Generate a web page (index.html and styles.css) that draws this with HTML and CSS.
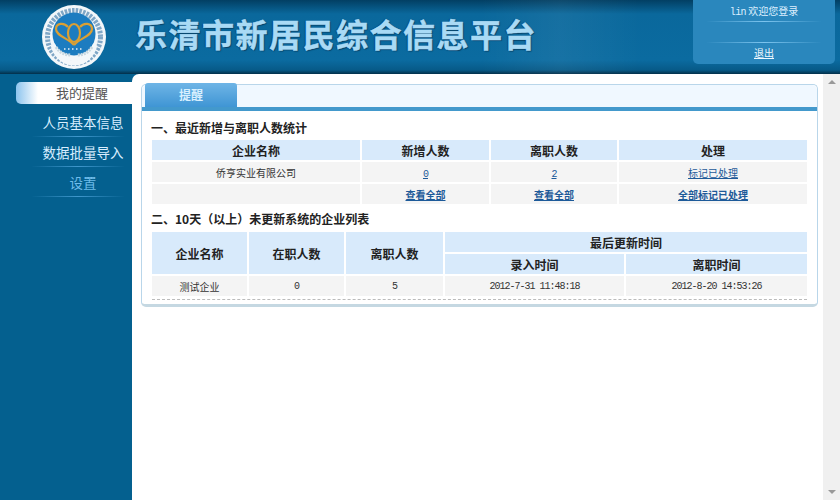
FILE: index.html
```html
<!DOCTYPE html>
<html>
	<head>
		<meta charset="utf-8" />
		<title>乐清市新居民综合信息平台</title>
		<link rel="stylesheet" href="styles.css">
	</head>
	<body>
		<div class="header">
			<div class="logo">
				<svg width="66" height="66" viewBox="0 0 66 66">
					<circle cx="33" cy="32" r="32" fill="#f3f7fa"/>
					<circle cx="33" cy="32" r="26.5" fill="none" stroke="#7fa6c6" stroke-width="5" stroke-dasharray="2.5 1.2"/>
					<circle cx="33" cy="29" r="21.5" fill="#1c7cc0"/>
					<path d="M12 40C15 52 24 58 33 58C42 58 51 52 54 40" fill="none" stroke="#f3f7fa" stroke-width="5"/>
					<g fill="none" stroke="#dca033" stroke-width="2.2">
						<path d="M33 40C27 33 15 31 15 24C15 18 23 17 27 22"/>
						<path d="M33 40C39 33 51 31 51 24C51 18 43 17 39 22"/>
						<ellipse cx="33" cy="28" rx="6" ry="9"/>
					</g>
					<path d="M23 44H43" stroke="#e8f2f8" stroke-width="1.5" stroke-dasharray="1.5 2.5"/>
					<g fill="none" stroke="#c9d8e0" stroke-width="3" stroke-dasharray="2 1">
						<path d="M15 42C19 48 24 50 30 50"/>
						<path d="M51 42C47 48 42 50 36 50"/>
					</g>
				</svg>
			</div>
			<div class="site-title">乐清市新居民综合信息平台</div>
			<div class="user-box">
				<div class="user-line first"><span class="user-name">lin</span> 欢迎您登录</div>
				<div class="user-line"></div>
				<div class="user-line last"><a href="#">退出</a></div>
			</div>
		</div>
		<div class="wrap">
			<div class="side">
				<a class="side-on" href="#">我的提醒</a>
				<a class="side-item" href="#">人员基本信息</a>
				<a class="side-item" href="#">数据批量导入</a>
				<a class="side-item dim" href="#">设置</a>
			</div>
			<div class="main">
				<div class="panel">
					<div class="tabs"><span class="tab">提醒</span></div>
					<div class="panel-body">
						<h3>一、最近新增与离职人数统计</h3>
						<table class="list list1">
							<tr>
								<th class="c1">企业名称</th>
								<th class="c2">新增人数</th>
								<th class="c3">离职人数</th>
								<th>处理</th>
							</tr>
							<tr>
								<td>侨亨实业有限公司</td>
								<td><a class="mono" href="#">0</a></td>
								<td><a class="mono" href="#">2</a></td>
								<td><a href="#">标记已处理</a></td>
							</tr>
							<tr>
								<td></td>
								<td><a class="bold" href="#">查看全部</a></td>
								<td><a class="bold" href="#">查看全部</a></td>
								<td><a class="bold" href="#">全部标记已处理</a></td>
							</tr>
						</table>
						<h3 class="second">二、10天（以上）未更新系统的企业列表</h3>
						<table class="list list2">
							<tr>
								<th class="w97" rowspan="2">企业名称</th>
								<th class="w97" rowspan="2">在职人数</th>
								<th class="w99" rowspan="2">离职人数</th>
								<th colspan="2">最后更新时间</th>
							</tr>
							<tr>
								<th class="w182">录入时间</th>
								<th>离职时间</th>
							</tr>
							<tr>
								<td>测试企业</td>
								<td class="mono">0</td>
								<td class="mono">5</td>
								<td class="mono">2012-7-31 11:48:18</td>
								<td class="mono">2012-8-20 14:53:26</td>
							</tr>
						</table>
						<div class="dash"></div>
					</div>
				</div>
			</div>
			<div class="scrollbar">
				<span class="arrow up"></span>
				<span class="arrow down"></span>
			</div>
		</div>
	</body>
</html>
```

FILE: styles.css
```css
*{margin: 0;padding: 0;box-sizing: border-box;}
html,body{height: 100%;overflow: hidden;}
body{font-family: "Noto Sans CJK SC","Liberation Sans",sans-serif;
	font-size: 12px;
	color: #222;
	background-color: #04608f;
	display: flex;
	flex-direction: column;
}
a{color: #1d5a99;}

.header{height: 74px;
	display: flex;
	background:
		linear-gradient(90deg,rgba(255,255,255,0) 480px,rgba(255,255,255,.05) 560px,rgba(255,255,255,0) 640px),
		linear-gradient(#023f63 0,#0a689c 14px,#0b6ba0 60px,#075a88 70px,#032f49 74px);
	flex: none;
}
.logo{width: 135px;padding: 5px 0 0 41px;flex: none;}
.site-title{width: 558px;
	padding-top: 10px;
	font-size: 32px;
	line-height: 46px;
	font-weight: 700;
	letter-spacing: 1.5px;
	color: #a9daf5;
	-webkit-text-stroke: .5px #a9daf5;
	text-shadow: 1px 1px 1px #063f63,-1px 0 1px #063f63;
	white-space: nowrap;
}
.user-box{width: 142px;
	height: 64px;
	background-color: #2a87bd;
	border-radius: 0 0 5px 5px;
	padding: 0 14px;
	color: #dcefff;
	flex: none;
}
.user-line{height: 21px;
	line-height: 20px;
	text-align: center;
	border-bottom: 1px solid;
	border-image: linear-gradient(90deg,rgba(120,195,240,0),#7cc4ee 50%,rgba(120,195,240,0)) 1;
	font-size: 10px;
}
.user-line.first{height: 22px;line-height: 21px;}
.user-line.last{border-bottom: 0;line-height: 20px;}
.user-line a{color: #eef8ff;}
.user-name{font-family: "Liberation Mono",monospace;font-size: 10px;letter-spacing: -.6px;}

.wrap{flex: 1;display: flex;min-height: 0;}
.side{width: 132px;padding: 8px 0 0 16px;flex: none;}
.side-on{display: block;
	height: 22px;
	line-height: 21px;
	margin-bottom: 3px;
	padding-left: 16px;
	text-align: center;
	font-size: 13px;
	color: #555;
	text-decoration: none;
	background: linear-gradient(90deg,#8cc4ee 0,#fff 22px);
	border-radius: 5px 0 0 5px;
}
.side-item{display: block;
	height: 30px;
	line-height: 30px;
	margin: 0 8px 0 16px;
	padding-left: 10px;
	text-align: center;
	font-size: 13.5px;
	white-space: nowrap;
	color: #d8eeff;
	text-decoration: none;
	border-bottom: 1px solid;
	border-image: linear-gradient(90deg,rgba(70,150,200,0),#3f97cc 50%,rgba(70,150,200,0)) 1;
}
.side-item.dim{color: #70bdeb;}

.main{flex: 1;background-color: #fff;border-radius: 7px 0 0 0;padding: 10px 5px 0 9px;min-width: 0;}
.panel{border: 1px solid #b9d6ea;
	border-bottom: 3px solid #c5d8e2;
	border-radius: 5px;
	height: 223px;
}
.tabs{display: flex;
	height: 26px;
	background-color: #f0f8ff;
	border-bottom: 4px solid #4399cc;
	border-radius: 5px 5px 0 0;
	padding-left: 3px;
}
.tab{display: block;
	width: 92px;
	height: 24px;
	margin-top: -2px;
	line-height: 24px;
	text-align: center;
	font-weight: 700;
	color: #d9f0ff;
	background: linear-gradient(#6fb5e6,#3f95d4);
	border-radius: 3px 3px 0 0;
}
.panel-body{padding: 0 10px;}
h3{font-size: 12px;line-height: 18px;padding-top: 8px;height: 29px;margin-left: -1px;color: #222;font-weight: 700;}
h3.second{padding-top: 4px;height: 26px;}
.list{width: 655px;border-collapse: separate;border-spacing: 0;table-layout: fixed;}
.list th,.list td{height: 22px;text-align: center;border-right: 2px solid #fff;border-bottom: 2px solid #fff;}
.list th:last-child,.list td:last-child{border-right: 0;}
.list th{background-color: #d8eafb;font-size: 12px;font-weight: 700;}
.list td{background-color: #f4f4f4;font-size: 10px;color: #333;}
.list1 .c1{width: 210px;}
.list1 .c2{width: 129px;}
.list1 .c3{width: 128px;}
.list td .bold{font-weight: 700;}
.list2 .w97{width: 97px;}
.list2 .w99{width: 99px;}
.list2 .w182{width: 182px;}
.list .mono{font-family: "Liberation Mono",monospace;font-size: 10px;letter-spacing: -1px;}
.dash{border-top: 1px dashed #bbb;margin-top: 1px;}

.scrollbar{width: 17px;flex: none;background-color: #f0f0f0;position: relative;}
.arrow{position: absolute;left: 5px;border-left: 4px solid transparent;border-right: 4px solid transparent;}
.arrow.up{top: 6px;border-bottom: 4px solid #999;}
.arrow.down{bottom: 6px;border-top: 4px solid #999;}
```
